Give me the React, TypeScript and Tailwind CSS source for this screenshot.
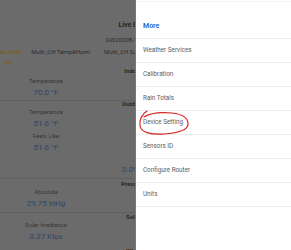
import React from 'react';

const menuItems = [
  'Weather Services',
  'Calibration',
  'Rain Totals',
  'Device Setting',
  'Sensors ID',
  'Configure Router',
  'Units',
];

function Reading({ label, value }: { label: string; value: string }) {
  return (
    <div className="flex flex-col items-center">
      <div className="h-[8px] leading-[8px] text-[6px] text-[#363636]">{label}</div>
      <div className="mt-[2px] h-[12px] leading-[12px] text-[8px] text-[#2e4568]">{value}</div>
    </div>
  );
}

function SectionHeader({ title }: { title: string }) {
  return (
    <div className="w-[266px] text-center h-[8px] leading-[8px] text-[6px] font-bold text-[#262626]">
      {title}
    </div>
  );
}

export default function App() {
  return (
    <div
      className="flex w-[291px] h-[250px] overflow-hidden"
      style={{ fontFamily: 'Roboto, "Liberation Sans", sans-serif' }}
    >
      {/* dimmed page behind the drawer */}
      <div className="w-[136px] h-full bg-[#6b6b6b] overflow-hidden border-r border-[#7a7a7a]">
        <div className="w-[266px] flex flex-col">
          <div className="h-[21px]" />
          <div className="w-[266px] text-center h-[8px] leading-[8px] text-[7px] font-bold text-[#262626]">
            Live Data
          </div>
          <div className="h-[7px]" />
          <div className="w-[266px] text-center h-[8px] leading-[8px] text-[6px] text-[#2b2b2b]">
            GW2000B-WIFI4B2D
          </div>
          {/* tabs */}
          <div className="mt-[4px] h-[16px] flex items-start gap-[8px] -ml-[6px] text-[6px] text-[#2b2b2b]">
            <div className="flex flex-col items-center">
              <div className="h-[8px] leading-[8px] text-[#7d5b12]">Main Data</div>
              <div className="mt-[6px] w-[7px] h-[1px] bg-[#7d5b12]" />
            </div>
            <div className="h-[8px] leading-[8px] pl-[2px]">Multi_CH Temp&amp;Humi</div>
            <div className="h-[8px] leading-[8px] pl-[6px]">Multi_CH Soil</div>
          </div>

          {/* Indoor */}
          <div className="border-b border-[#616161] h-[37px]">
            <div className="mt-[3px]">
              <SectionHeader title="Indoor" />
            </div>
            <div className="w-[92px] pt-[2px]">
              <Reading label="Temperature" value="70.0 °F" />
            </div>
          </div>

          {/* Outdoor */}
          <div className="border-b border-[#616161] h-[78px]">
            <div className="-mt-[1px]">
              <SectionHeader title="Outdoor" />
            </div>
            <div className="flex">
              <div className="w-[92px] flex flex-col">
                <Reading label="Temperature" value="51.6 °F" />
                <div className="mt-[2px]">
                  <Reading label="Feels Like" value="51.6 °F" />
                </div>
              </div>
              <div className="w-[96px] pt-[46px]">
                <Reading label="VPD" value="0.091 kPa" />
              </div>
            </div>
          </div>

          {/* Pressure */}
          <div className="border-b border-[#616161] h-[34px]">
            <div className="mt-[1px]">
              <SectionHeader title="Pressure" />
            </div>
            <div className="w-[92px]">
              <Reading label="Absolute" value="29.75 inHg" />
            </div>
          </div>

          {/* Solar */}
          <div>
            <SectionHeader title="Solar" />
            <div className="w-[92px]">
              <Reading label="Solar Irradiance" value="0.27 Klux" />
            </div>
            <div className="mt-[4px]">
              <SectionHeader title="Wind" />
            </div>
          </div>
        </div>
      </div>

      {/* drawer */}
      <div className="relative flex-1 h-full bg-white">
        <div className="h-[2px] border-b border-[#f3f3f3]" />
        <div className="h-[13px]" />
        <div className="h-[24px] border-b border-[#ececec] px-[7px] flex items-center text-[7px] font-semibold text-[#1f5fd1]">
          More
        </div>
        {menuItems.map((item) => (
          <div
            key={item}
            className="h-[24px] border-b border-[#ececec] px-[7px] flex items-center text-[6.3px] text-[#5c5c5c]"
          >
            {item}
          </div>
        ))}
        <svg
          className="absolute left-0 top-0 pointer-events-none"
          width="80"
          height="150"
          viewBox="0 0 80 150"
        >
          <path
            d="M 11 111 C 6 114, 3 120, 4 126 C 5 132, 14 135, 28 134 C 42 133, 52 130, 52 124 C 52 117, 45 114, 36 113 C 25 112, 14 113, 8 117"
            fill="none"
            stroke="#d42424"
            strokeWidth="1.2"
            strokeLinecap="round"
          />
        </svg>
      </div>
    </div>
  );
}
